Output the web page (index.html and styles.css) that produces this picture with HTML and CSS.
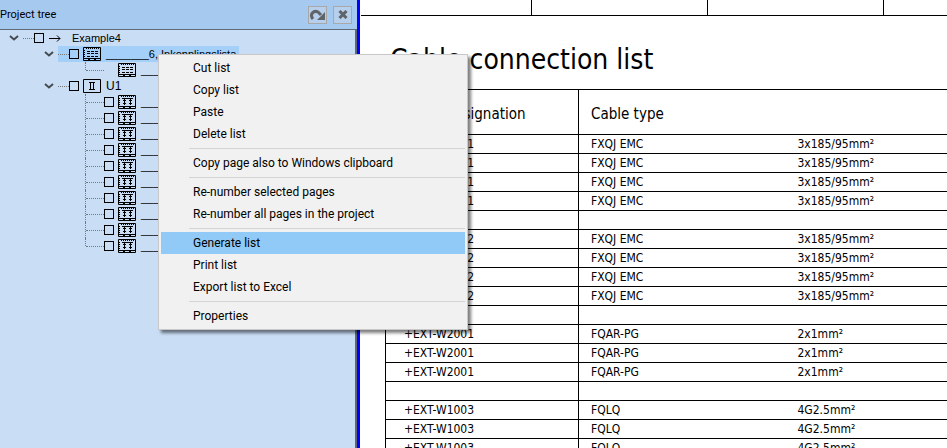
FILE: index.html
```
<!DOCTYPE html>
<html lang="en">
<head>
    <meta charset="UTF-8">
    <meta name="viewport" content="width=device-width, initial-scale=1.0">
    <title>Example4 - Cable connection list</title>
    <link rel="stylesheet" href="styles.css">
</head>
<body>
    <!-- Shared icons -->
    <svg class="icon-defs" width="0" height="0">
        <symbol id="icon-chevron" viewBox="0 0 10 6">
            <path d="M1 1l4 3.5L9 1" fill="none" stroke="#444c52" stroke-width="2"/>
        </symbol>
        <symbol id="icon-page" viewBox="0 0 18 14">
            <path d="M.5 .5h17v13H.5zM0 11.5h18" fill="none" stroke="#000"/>
            <path d="M3 1.5h13" stroke="#000" stroke-dasharray="1 1"/>
            <path d="M1.5 3v8" stroke="#000" stroke-dasharray="1 1"/>
            <path d="M5 12.5h2M11 12.5h2" stroke="#000"/>
        </symbol>
        <symbol id="icon-list" viewBox="0 0 18 14">
            <use href="#icon-page"/>
            <path d="M4 4.5h12M4 6.5h12M4 9.5h12" stroke="#000" stroke-dasharray="3 1"/>
        </symbol>
        <symbol id="icon-diagram" viewBox="0 0 18 14">
            <use href="#icon-page"/>
            <path d="M4 3.5h11M6.5 3v7M12.5 3v7M5 5.5h3M11 5.5h3M5 8.5h3M11 8.5h3" fill="none" stroke="#000"/>
        </symbol>
        <symbol id="icon-unit" viewBox="0 0 18 14">
            <path d="M.5 .5h17v13H.5zM6 3.5h6M6 10.5h6M7.5 3v8M10.5 3v8" fill="none" stroke="#000"/>
        </symbol>
    </svg>

    <div class="app">
        <!-- Project tree -->
        <aside class="panel">
            <header class="panel-header">
                <h2>Project tree</h2>
                <button type="button" class="tool-button" aria-label="Refresh">
                    <svg width="17" height="12" viewBox="0 0 17 12"><path d="M4 10C0 5 5 1 9 3l3 3" fill="none" stroke="#5f6468" stroke-width="3"/><path d="M16 3v8H8z" fill="#5f6468"/></svg>
                </button>
                <button type="button" class="tool-button" aria-label="Close">
                    <svg width="10" height="9" viewBox="0 0 10 9"><path d="M1.500 1l7 7M8.500 1l-7 7" stroke="#5f6468" stroke-width="3"/></svg>
                </button>
            </header>
            <div class="tree" id="tree">
                <div class="node level-0">
                    <svg class="chevron"><use href="#icon-chevron"/></svg>
                    <span class="dots"></span>
                    <input type="checkbox" aria-label="Example4">
                    <svg class="arrow" viewBox="0 0 12 7"><path d="M0 3.500h11M8 .5l3 3-3 3" fill="none" stroke="#000"/></svg>
                    <span>Example4</span>
                </div>
                <div class="node level-1">
                    <svg class="chevron"><use href="#icon-chevron"/></svg>
                    <div class="selected">
                        <span class="dots"></span>
                        <input type="checkbox" aria-label="Inkopplingslista">
                        <svg class="icon"><use href="#icon-list"/></svg>
                        <span>_______6, Inkopplingslista</span>
                    </div>
                </div>
                <div class="node level-2 page-child last">
                    <span class="dots"></span>
                    <svg class="icon"><use href="#icon-list"/></svg>
                    <span>___</span>
                </div>
                <div class="node level-1">
                    <svg class="chevron"><use href="#icon-chevron"/></svg>
                    <span class="dots"></span>
                    <input type="checkbox" aria-label="U1">
                    <svg class="icon"><use href="#icon-unit"/></svg>
                    <span class="unit-name">U1</span>
                </div>
            </div>
        </aside>

        <!-- Drawing sheet -->
        <main class="sheet">
            <div class="title-block"><span></span><span></span><span></span><span></span></div>
            <h1>Cable connection list</h1>
            <table>
                <colgroup>
                    <col class="col-name">
                    <col class="col-type">
                    <col>
                </colgroup>
                <thead>
                    <tr>
                        <th scope="col">Cable designation</th>
                        <th scope="col" colspan="2">Cable type</th>
                    </tr>
                </thead>
                <tbody id="cables"></tbody>
            </table>
        </main>
    </div>

    <!-- Context menu -->
    <div class="context-menu" role="menu">
        <button type="button" role="menuitem">Cut list</button>
        <button type="button" role="menuitem">Copy list</button>
        <button type="button" role="menuitem">Paste</button>
        <button type="button" role="menuitem">Delete list</button>
        <hr>
        <button type="button" role="menuitem">Copy page also to Windows clipboard</button>
        <hr>
        <button type="button" role="menuitem">Re-number selected pages</button>
        <button type="button" role="menuitem">Re-number all pages in the project</button>
        <hr>
        <button type="button" role="menuitem" class="active">Generate list</button>
        <button type="button" role="menuitem">Print list</button>
        <button type="button" role="menuitem">Export list to Excel</button>
        <hr>
        <button type="button" role="menuitem">Properties</button>
    </div>

    <script src="script.js"></script>
</body>
</html>
```
FILE: styles.css
```
:root {
    --panel: #c9ddf5;
    --panel-header: #a6c9ef;
    --highlight: #91c9f7;
    --selection: #a3cff8;
    --splitter: #0000ff;
    --line: #000;
}

* {
    margin: 0;
    padding: 0;
    box-sizing: border-box;
}

body {
    font-family: Roboto, "Open Sans", sans-serif;
    font-size: 12px;
    color: #000;
    background: #fff;
    overflow: hidden;
}

.icon-defs {
    position: absolute;
}

.app {
    display: grid;
    grid-template-columns: 360px 1fr;
    height: 100vh;
}

/* Project tree */
.panel {
    display: flex;
    flex-direction: column;
    background: var(--panel);
    border-right: 3px solid var(--splitter);
}

.panel-header {
    display: flex;
    align-items: center;
    gap: 6px;
    height: 29px;
    padding-right: 5px;
    background: var(--panel-header);
}

.panel-header h2 {
    flex: 1;
    font-size: 11px;
    font-weight: 400;
}

.tool-button {
    display: grid;
    place-items: center;
    width: 19px;
    height: 18px;
    background: #b5cfec;
    border: 1px solid #a8a8a8;
}

.tree {
    flex: 1;
    border: 1px solid #5f6a74;
    border-width: 1px 2px 0 0;
}

.node,
.selected {
    display: flex;
    align-items: center;
    height: 16px;
    white-space: pre;
    font-family: "Liberation Sans", Arial, sans-serif;
    font-size: 11px;
}

.node input {
    appearance: none;
    flex: none;
    width: 10px;
    height: 10px;
    margin-right: 4px;
    border: 1px solid var(--line);
}

.level-0 {
    padding-left: 9px;
}

.level-1 {
    padding-left: 44px;
}

.level-2 {
    position: relative;
    padding-left: 86px;
}

.chevron {
    flex: none;
    width: 10px;
    height: 6px;
    margin-right: 4px;
}

.arrow {
    flex: none;
    width: 12px;
    height: 7px;
    margin: 0 11px 0 1px;
}

.icon {
    flex: none;
    width: 18px;
    height: 14px;
    margin-right: 5px;
}

.unit-name {
    font-size: 12px;
}

.dots {
    flex: none;
    width: 11px;
    border-top: 1px dotted #777;
}

.level-2 .dots {
    width: 18px;
}

.page-child .dots {
    margin-right: 14px;
}

.level-2::before {
    content: "";
    position: absolute;
    left: 85px;
    top: 0;
    height: 16px;
    border-left: 1px dotted #777;
}

.level-2.last::before {
    height: 8px;
}

.selected {
    flex: none;
    background: var(--selection);
    padding-right: 3px;
}

/* Drawing sheet */
.sheet {
    font-family: "DejaVu Sans Condensed", "DejaVu Sans", sans-serif;
    padding-left: 1px;
    overflow: hidden;
}

.title-block {
    display: grid;
    grid-template-columns: 170px 176px 176px 1fr;
    height: 16px;
    border-bottom: 1px solid var(--line);
}

.title-block span + span {
    border-left: 1px solid var(--line);
}

h1 {
    margin: 26px 0 12px 29px;
    font-size: 28px;
    line-height: 35px;
    font-weight: 400;
}

table {
    width: calc(100% - 24px);
    margin-left: 24px;
    border-collapse: collapse;
    table-layout: fixed;
    font-size: 12px;
}

.col-name {
    width: 193px;
}

.col-type {
    width: 207px;
}

th,
td {
    height: 19px;
    padding-left: 12px;
    text-align: left;
    line-height: 16px;
    border-top: 1px solid var(--line);
    border-left: 1px solid var(--line);
}

th {
    height: 45px;
    padding-top: 3px;
    font-size: 15px;
    font-weight: 400;
}

th:first-child,
td:first-child {
    padding-left: 18px;
}

td:last-child {
    border-left: 0;
}

/* Context menu */
.context-menu {
    position: absolute;
    left: 158px;
    top: 54px;
    width: 310px;
    padding: 2px;
    background: #f1f1f1;
    border: 1px solid #c8c8c8;
    box-shadow: 3px 3px 3px rgba(0, 0, 0, 0.5);
}

.context-menu button {
    display: block;
    width: 100%;
    height: 22px;
    padding-left: 32px;
    text-align: left;
    font: inherit;
    background: none;
    border: 0;
}

.context-menu button.active {
    background: var(--highlight);
}

.context-menu hr {
    margin: 3px 0 3px 28px;
    border: 0;
    border-top: 1px solid #d4d4d4;
}
```
FILE: script.js
```
// Pages under U1
const tree = document.getElementById('tree');
const pageCount = 10;
for (let i = 1; i <= pageCount; i++) {
    tree.insertAdjacentHTML('beforeend', `
        <div class="node level-2${i === pageCount ? ' last' : ''}"><span class="dots"></span><input type="checkbox" aria-label="Page ${i}"><svg class="icon"><use href="#icon-diagram"/></svg><span>___</span></div>`);
}

// Cable groups, each followed by an empty row
const groups = [
    { name: '+EXT-W1001', type: 'FXQJ EMC', size: '3x185/95mm²', count: 4 },
    { name: '+EXT-W1002', type: 'FXQJ EMC', size: '3x185/95mm²', count: 4 },
    { name: '+EXT-W2001', type: 'FQAR-PG', size: '2x1mm²', count: 3 },
    { name: '+EXT-W1003', type: 'FQLQ', size: '4G2.5mm²', count: 3 }
];
document.getElementById('cables').innerHTML = groups.map(g =>
    `<tr><td>${g.name}</td><td>${g.type}</td><td>${g.size}</td></tr>`.repeat(g.count)
).join('<tr><td></td><td></td><td></td></tr>');
```
